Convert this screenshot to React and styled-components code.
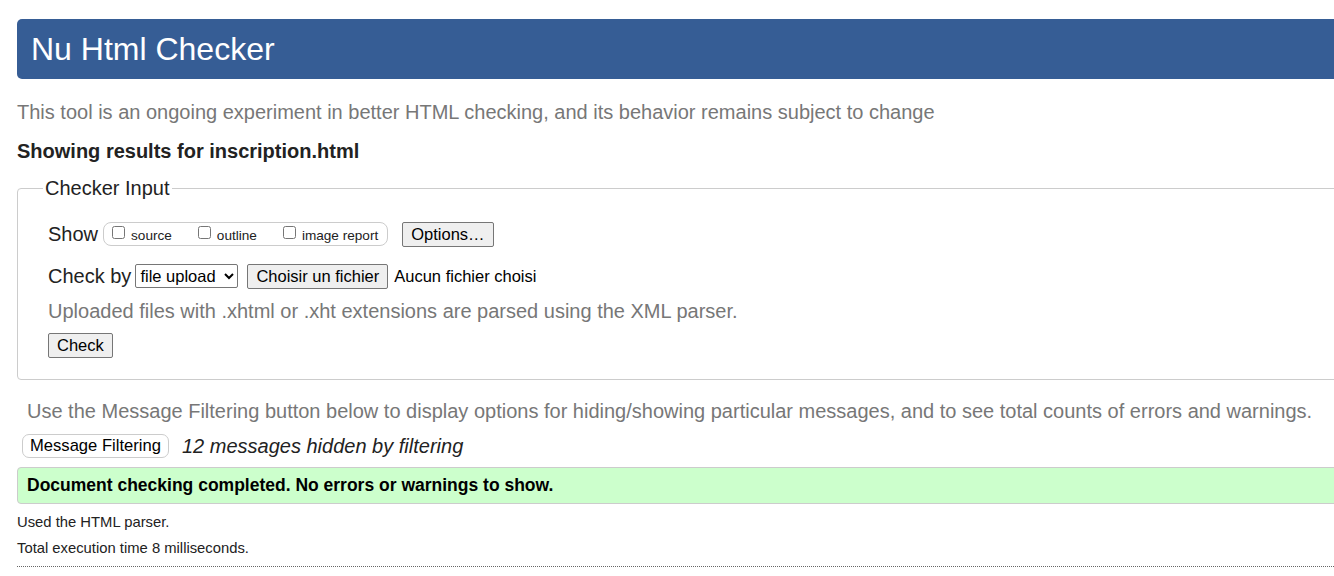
import React from "react";
import styled, { createGlobalStyle } from "styled-components";

const Global = createGlobalStyle`
  html, body { margin: 0; padding: 0; background: #fff; overflow: hidden; }
  body { font-family: "Liberation Sans", Arial, sans-serif; color: #222; }
`;

const Page = styled.div`
  width: 1400px;
  padding: 19px 0 0 17px;
  box-sizing: border-box;
`;

const Header = styled.h1`
  margin: 0;
  height: 60px;
  background: #365d95;
  color: #fff;
  border-radius: 5px 0 0 5px;
  font-weight: normal;
  font-size: 32px;
  line-height: 60px;
  padding-left: 14px;
`;

const Note = styled.p`
  margin: ${(p) => p.$m || "0"};
  color: #777;
  font-size: 20px;
  line-height: 24px;
  padding-left: ${(p) => p.$indent || "0"};
`;

const Results = styled.h2`
  margin: 15px 0 0;
  font-size: 20px;
  line-height: 24px;
  font-weight: bold;
  color: #222;
`;

const Fieldset = styled.fieldset`
  margin: 14px 0 0;
  border: 1px solid #ccc;
  border-radius: 4px;
  padding: 16px 30px 21px 30px;
  min-width: 0;
`;

const Legend = styled.legend`
  font-size: 20px;
  padding: 0 2px;
  margin-left: -5px;
  color: #222;
`;

const Row = styled.div`
  display: flex;
  align-items: center;
  height: ${(p) => p.$h || "auto"};
  margin-top: ${(p) => p.$mt || "0"};
`;

const Label = styled.span`
  font-size: 20px;
  color: #222;
  margin-right: ${(p) => p.$mr || "5px"};
`;

const OptionsBox = styled.span`
  display: inline-flex;
  align-items: center;
  border: 1px solid #ccc;
  border-radius: 8px;
  height: 22px;
  padding: 0 9px 0 6px;
  margin-right: 14px;
`;

const CheckItem = styled.label`
  display: inline-flex;
  align-items: center;
  font-size: 13.6px;
  color: #222;
  margin-right: ${(p) => p.$mr || "0"};
  input { margin: 0 6px 4px 2px; width: 13px; height: 13px; }
  span { padding-top: 3px; }
`;

const Button = styled.button`
  font-family: "Liberation Sans", Arial, sans-serif;
  font-size: 16.5px;
  color: #000;
  background: #efefef;
  border: 1px solid #767676;
  border-radius: 2px;
  height: 25px;
  padding: 0 8px;
  margin: 0;
  margin-right: ${(p) => p.$mr || "0"};
`;

const Select = styled.select`
  font-family: "Liberation Sans", Arial, sans-serif;
  font-size: 16.5px;
  color: #000;
  background: #fff;
  border: 1px solid #767676;
  border-radius: 2px;
  height: 24px;
  width: 103px;
  margin-right: 9px;
`;

const FileText = styled.span`
  font-size: 16.5px;
  color: #000;
  margin-left: 6px;
`;

const FilterRow = styled.div`
  display: flex;
  align-items: center;
  margin: 11px 0 0 5px;
`;

const FilterButton = styled.button`
  font-family: "Liberation Sans", Arial, sans-serif;
  font-size: 16.6px;
  color: #000;
  background: #fff;
  border: 1px solid #ccc;
  border-radius: 7px;
  height: 24px;
  padding: 0 7px;
  margin-right: 13px;
`;

const Hidden = styled.span`
  font-size: 20px;
  font-style: italic;
  color: #222;
`;

const Success = styled.div`
  margin-top: 9px;
  background: #ccffcc;
  border: 1px solid #ccc;
  border-radius: 4px;
  height: 35px;
  display: flex;
  align-items: center;
  padding-left: 9px;
  font-size: 17.5px;
  font-weight: bold;
  color: #000;
`;

const Small = styled.p`
  margin: ${(p) => p.$m || "0"};
  font-size: 14.8px;
  line-height: 17px;
  color: #222;
`;

const Rule = styled.hr`
  margin: 9px 0 0;
  border: 0;
  border-top: 1px dotted #666;
  height: 0;
`;

export default function App() {
  return (
    <>
      <Global />
      <Page>
        <Header>Nu Html Checker</Header>
        <Note $m="21px 0 0">
          This tool is an ongoing experiment in better HTML checking, and its behavior remains subject to change
        </Note>
        <Results>Showing results for inscription.html</Results>
        <Fieldset>
          <Legend>Checker Input</Legend>
          <Row $h="28px" $mt="4px">
            <Label>Show</Label>
            <OptionsBox>
              <CheckItem $mr="24px">
                <input type="checkbox" />
                <span>source</span>
              </CheckItem>
              <CheckItem $mr="24px">
                <input type="checkbox" />
                <span>outline</span>
              </CheckItem>
              <CheckItem>
                <input type="checkbox" />
                <span>image report</span>
              </CheckItem>
            </OptionsBox>
            <Button>Options…</Button>
          </Row>
          <Row $h="28px" $mt="14px">
            <Label $mr="4px">Check by</Label>
            <Select defaultValue="file">
              <option value="file">file upload</option>
              <option value="address">address</option>
              <option value="text">text input</option>
            </Select>
            <Button>Choisir un fichier</Button>
            <FileText>Aucun fichier choisi</FileText>
          </Row>
          <Note $m="9px 0 0">
            Uploaded files with .xhtml or .xht extensions are parsed using the XML parser.
          </Note>
          <Row $mt="10px">
            <Button>Check</Button>
          </Row>
        </Fieldset>
        <Note $m="19px 0 0" $indent="10px">
          Use the Message Filtering button below to display options for hiding/showing particular messages, and to see total counts of errors and warnings.
        </Note>
        <FilterRow>
          <FilterButton>Message Filtering</FilterButton>
          <Hidden>12 messages hidden by filtering</Hidden>
        </FilterRow>
        <Success>Document checking completed. No errors or warnings to show.</Success>
        <Small $m="10px 0 0">Used the HTML parser.</Small>
        <Small $m="9px 0 0">Total execution time 8 milliseconds.</Small>
        <Rule />
      </Page>
    </>
  );
}
